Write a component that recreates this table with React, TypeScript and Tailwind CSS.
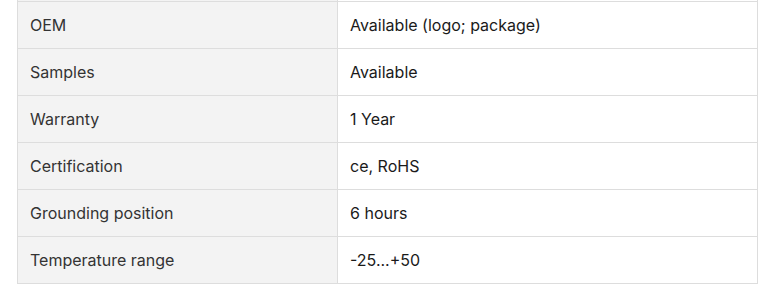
const rows: [string, string][] = [
  ['', ''],
  ['OEM', 'Available (logo; package)'],
  ['Samples', 'Available'],
  ['Warranty', '1 Year'],
  ['Certification', 'ce, RoHS'],
  ['Grounding position', '6 hours'],
  ['Temperature range', '-25...+50'],
]

export default function App() {
  return (
    <div className="h-[306px] w-[775px] overflow-hidden bg-white pl-[17px] font-['Inter',sans-serif]">
      <table className="-mt-[46px] w-[741px] table-fixed border-collapse text-[16px]">
        <tbody>
          {rows.map(([label, value], i) => (
            <tr key={i} className="h-[47px]">
              <td className="w-[320px] border border-[#dddddd] bg-[#f3f3f3] px-3 text-[#333333]">{label}</td>
              <td className="border border-[#dddddd] px-3 text-[#1a1a1a]">{value}</td>
            </tr>
          ))}
        </tbody>
      </table>
    </div>
  )
}
